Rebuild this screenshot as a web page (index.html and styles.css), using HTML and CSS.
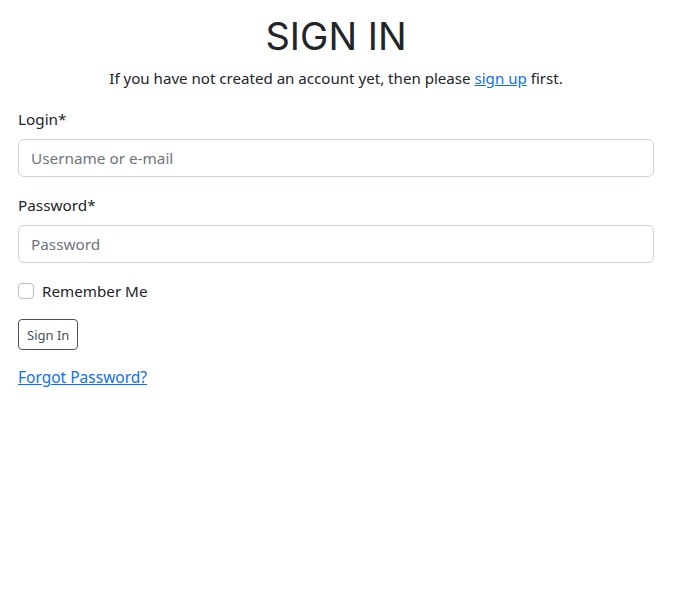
FILE: index.html
```html
<!DOCTYPE html>
<html>
<head>
<meta charset="utf-8">
<link rel="stylesheet" href="styles.css">
</head>
<body>
<main class="page">
  <h1 class="title">SIGN IN</h1>
  <p class="intro">If you have not created an account yet, then please <a href="#">sign up</a> first.</p>
  <form class="form">
    <div class="field">
      <label class="label" for="login">Login*</label>
      <input class="input" id="login" type="text" placeholder="Username or e-mail">
    </div>
    <div class="field">
      <label class="label" for="password">Password*</label>
      <input class="input" id="password" type="password" placeholder="Password">
    </div>
    <div class="check">
      <span class="box"></span>
      <span class="check-label">Remember Me</span>
    </div>
    <div class="actions">
      <button class="btn" type="button">Sign In</button>
    </div>
    <a class="forgot" href="#">Forgot Password?</a>
  </form>
</main>
</body>
</html>
```

FILE: styles.css
```css
* { box-sizing: border-box; }
html, body { margin: 0; background: #fff; }
body {
  font-family: "Noto Sans", sans-serif;
  font-size: 16px;
  line-height: 1.5;
  color: #212529;
}
.page { padding: 0 31px 0 18px; }
.title {
  margin: 13px 0 0;
  text-align: center;
  font-family: "Inter", "Liberation Sans", sans-serif;
  font-weight: 400;
  font-size: 38px;
  line-height: 46px;
  letter-spacing: 0;
}
.intro {
  margin: 8px 0 0;
  text-align: center;
  font-size: 15.1px;
}
a { color: #0d6efd; text-decoration: underline; }
.form { margin-top: 18px; }
.field { margin-bottom: 17px; }
.label {
  display: block;
  margin-bottom: 8px;
  font-size: 15.3px;
}
.input {
  display: block;
  width: 100%;
  height: 38px;
  padding: 6px 12px;
  border: 1px solid #ced4da;
  border-radius: 6px;
  font-family: inherit;
  font-size: 15.3px;
  color: #212529;
  background: #fff;
}
.input::placeholder { color: #6c757d; opacity: 1; }
.check {
  display: flex;
  align-items: center;
  gap: 8px;
  margin-top: 16px;
}
.box {
  width: 16px;
  height: 16px;
  border: 1px solid #b9bec4;
  border-radius: 4px;
}
.check-label { font-size: 15.2px; }
.actions { margin-top: 17px; }
.btn {
  font-family: inherit;
  font-size: 13px;
  line-height: 20px;
  padding: 4px 8px;
  height: 31px;
  border: 1px solid #495057;
  border-radius: 4px;
  background: #fff;
  color: #495057;
}
.forgot {
  display: inline-block;
  margin-top: 16px;
  font-size: 15.5px;
}
```
